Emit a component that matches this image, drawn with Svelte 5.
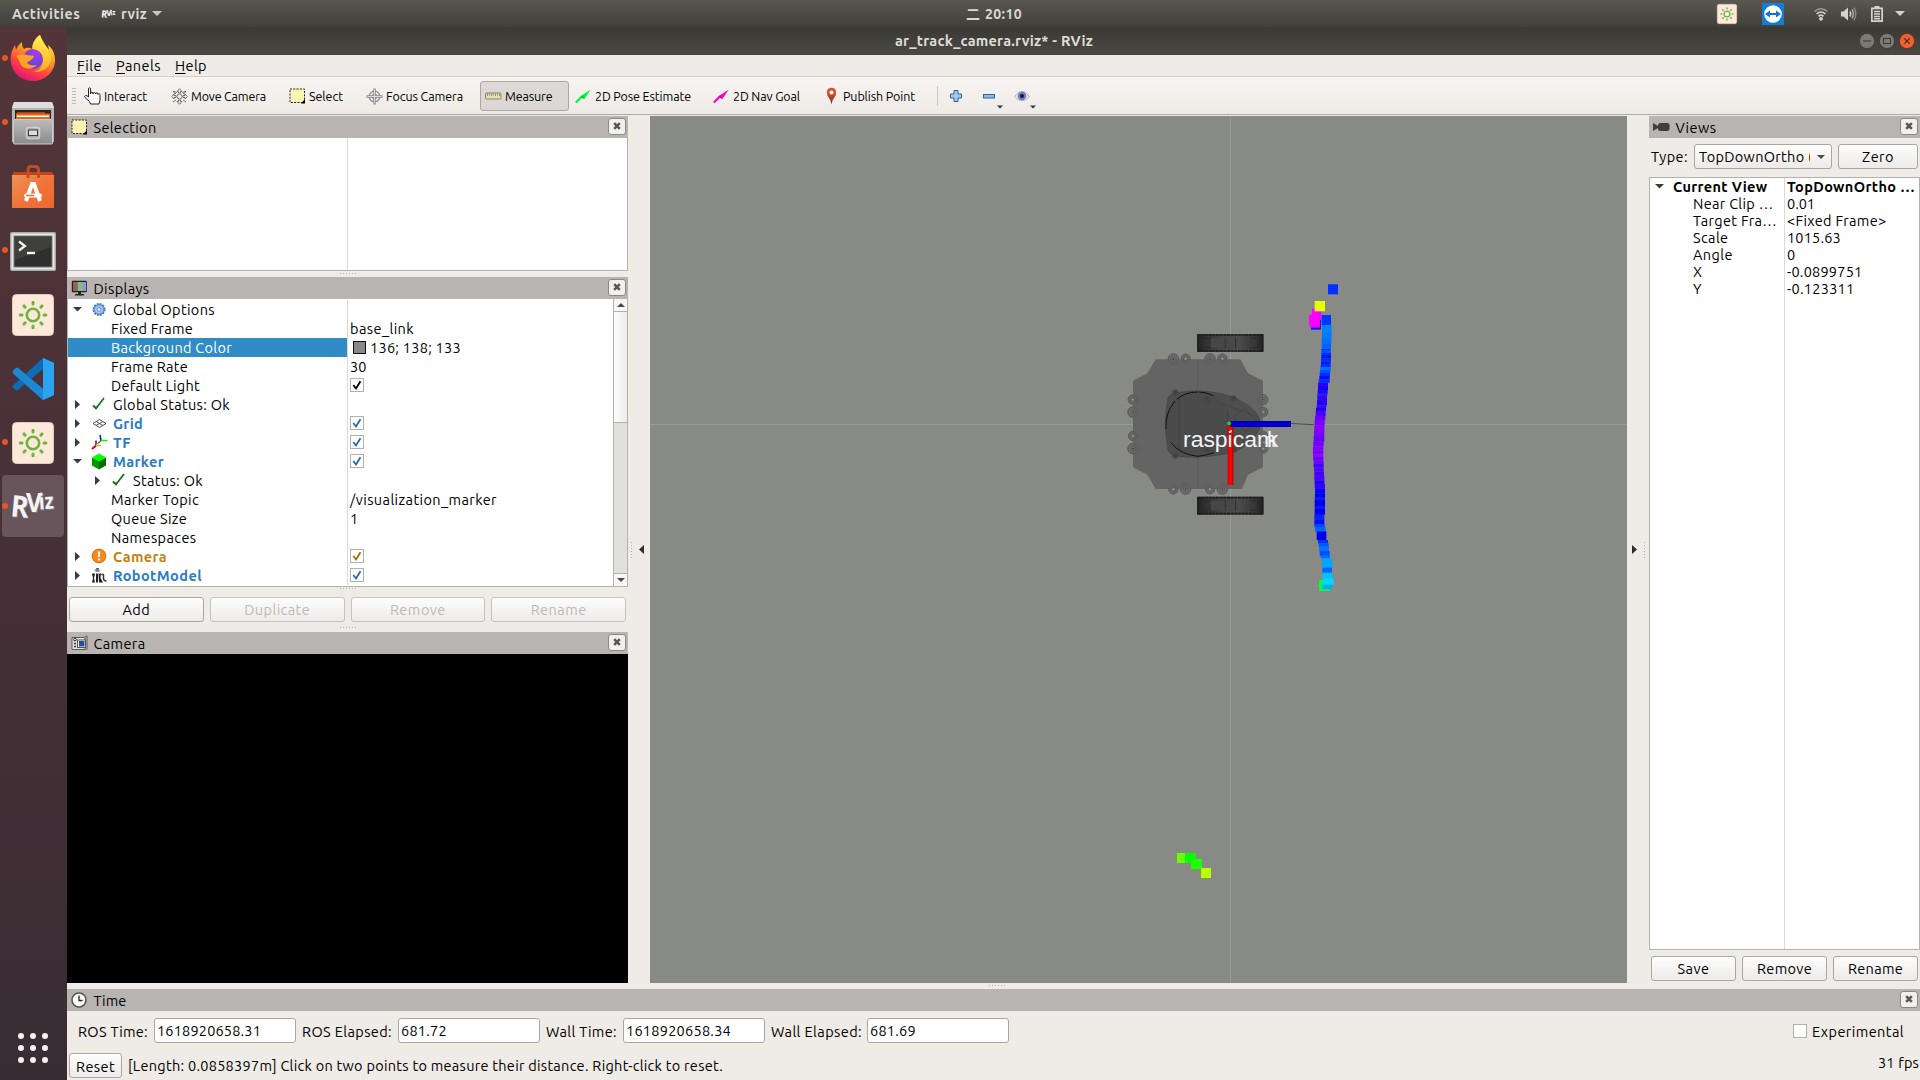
<script>
  // Spreads or tightens the letters so a label takes exactly `width` pixels.
  function fit(node, width) {
    const range = document.createRange();
    range.selectNodeContents(node);
    const natural = range.getBoundingClientRect().width;
    node.style.letterSpacing = (width + 1 - natural) / node.textContent.length + 'px';
  }

  const dock = [
    { icon: 'firefox', run: true }, { icon: 'files', run: true }, { icon: 'store' },
    { icon: 'terminal', run: true }, { icon: 'sun' }, { icon: 'code' },
    { icon: 'sun', run: true }, { icon: 'rviz', run: true, active: true }
  ];

  const tools = [
    { icon: 'hand', text: 'Interact', w: 42, box: 87 },
    { icon: 'move', text: 'Move Camera', w: 74, box: 118 },
    { icon: 'select', text: 'Select', w: 33, box: 77 },
    { icon: 'focus', text: 'Focus Camera', w: 76, box: 114 },
    { icon: 'ruler', text: 'Measure', w: 46.5, box: 89, pressed: true },
    { icon: 'pose', text: '2D Pose Estimate', w: 95, box: 138 },
    { icon: 'goal', text: '2D Nav Goal', w: 66, box: 110 },
    { icon: 'pin', text: 'Publish Point', w: 71, box: 114 }
  ];

  const rows = [
    { arrow: 'down', icon: 'gear', text: 'Global Options', w: 101 },
    { text: 'Fixed Frame', w: 81, value: 'base_link', vw: 63 },
    { text: 'Background Color', w: 120, value: '136; 138; 133', vw: 90, swatch: true, sel: true },
    { text: 'Frame Rate', w: 76, value: '30', vw: 15.5 },
    { text: 'Default Light', w: 88, check: '#000' },
    { arrow: 'right', icon: 'ok', text: 'Global Status: Ok', w: 116 },
    { arrow: 'right', icon: 'grid', text: 'Grid', w: 29, tone: 'blue', check: '#2568b0' },
    { arrow: 'right', icon: 'tf', text: 'TF', w: 17, tone: 'blue', check: '#2568b0' },
    { arrow: 'down', icon: 'cube', text: 'Marker', w: 50, tone: 'blue', check: '#2568b0' },
    { arrow: 'right', icon: 'ok', text: 'Status: Ok', w: 69, deep: true },
    { text: 'Marker Topic', w: 87, value: '/visualization_marker', vw: 146 },
    { text: 'Queue Size', w: 75, value: '1', vw: 7 },
    { text: 'Namespaces', w: 84.5 },
    { arrow: 'right', icon: 'warn', text: 'Camera', w: 53, tone: 'amber', check: '#a86c00' },
    { arrow: 'right', icon: 'robot', text: 'RobotModel', w: 88, tone: 'blue', check: '#2568b0' }
  ];

  const views = [
    ['Near Clip …', 79.5, '0.01', 27], ['Target Fra…', 83, '<Fixed Frame>', 98.5],
    ['Scale', 34.5, '1015.63', 53], ['Angle', 39, '0', 8],
    ['X', 9, '-0.0899751', 74.5], ['Y', 9, '-0.123311', 66.5]
  ];

  const clocks = [
    ['ROS Time:', 69, '1618920658.31', 103, 76], ['ROS Elapsed:', 89, '681.72', 45, 96],
    ['Wall Time:', 70, '1618920658.34', 104, 77], ['Wall Elapsed:', 90, '681.69', 45, 96]
  ];

  // Marker trail slices: top, left, width, colour (each reaches to the next top).
  const trail = [
    [135, 635, 28, '#0036ff'], [165, 636, 29, '#0085ff'], [184, 636, 29, '#007cff'], [205, 635, 29, '#006eff'],
    [222, 635, 28, '#0064ff'], [237, 634, 28, '#0034ff'], [242, 634, 28, '#0058ff'], [248, 634, 29, '#002cff'],
    [254, 634, 29, '#0017ff'], [266, 633, 30, '#0030ff'], [275, 633, 29, '#0018ff'], [284, 632, 30, '#002eff'],
    [291, 631, 32, '#0074ff'], [299, 630, 31, '#0050ff'], [308, 629, 31, '#0030ff'], [318, 628, 31, '#0010ff'],
    [328, 626, 33, '#002cff'], [338, 624, 30, '#2700ff'], [348, 624, 30, '#1200f5'], [360, 623, 30, '#2b00ff'],
    [371, 622, 30, '#0028ff'], [377, 622, 29, '#3600ff'], [390, 621, 30, '#2600ff'], [406, 620, 29, '#4100ff'],
    [414, 618, 30, '#1700ff'], [423, 617, 30, '#4e00ff'], [438, 615, 31, '#6a00ff'], [450, 614, 30, '#7b00ff'],
    [466, 613, 30, '#8700ff'], [483, 612, 31, '#7900ff'], [498, 611, 32, '#6900ff'], [515, 610, 31, '#7400ff'],
    [529, 609, 31, '#8500ff'], [542, 609, 31, '#7400ff'], [553, 609, 31, '#9500ff'], [561, 610, 30, '#6600ff'],
    [572, 611, 30, '#7600ff'], [580, 611, 30, '#3f00ff'], [592, 612, 29, '#5700ff'], [604, 613, 29, '#3700ff'],
    [617, 613, 30, '#4b00ff'], [632, 614, 29, '#1800ff'], [642, 614, 31, '#3500ff'], [655, 615, 30, '#0a00ff'],
    [671, 615, 30, '#0000e8'], [681, 614, 31, '#0018ff'], [689, 614, 31, '#0000f0'], [708, 614, 31, '#001aff'],
    [717, 614, 31, '#0000f0'], [734, 613, 30, '#0022ff'], [748, 613, 30, '#0010ff'], [762, 613, 31, '#0045ff'],
    [771, 615, 32, '#0064ff'], [784, 620, 29, '#0000ed'], [810, 624, 30, '#0030ff'], [820, 626, 30, '#0057ff'],
    [830, 627, 30, '#0076ff'], [843, 629, 30, '#0050ff'], [857, 632, 28, '#0073ff'], [865, 636, 31, '#00a6ff'],
    [893, 637, 29, '#0065ff'], [908, 638, 30, '#00bfff'], [925, 639, 32, '#00d8ff'], [944, 637, 29, '#00aaff'], [957, 0, 0, '#000']
  ];
  const bolts = [
    [190, 267, 1], [227, 266, 0], [300, 267, 1], [337, 266, 0], [190, 658, 0], [227, 657, 1], [300, 658, 0], [337, 657, 1],
    [68, 389, 0], [69, 426, 1], [69, 498, 0], [69, 536, 1], [458, 389, 1], [460, 426, 0], [460, 498, 0], [460, 536, 0]
  ];
  const rays = [0, 45, 90, 135, 180, 225, 270, 315];
</script>

{#snippet close()}
  <span class="close"><svg width="8" height="8" viewBox="0 0 8 8"><path d="M1.2 1.2L6.8 6.8M6.8 1.2L1.2 6.8" stroke="#5a5856" stroke-width="2.6" /></svg></span>
{/snippet}

{#snippet sun(size, h)}
  <svg width={size} height={h} viewBox="0 0 42 42" preserveAspectRatio="none">
    <rect x=".5" y=".5" width="41" height="41" rx="4" fill="#fde8d9" stroke="#e3cbbb" />
    <g fill="none" stroke="#6db33f" stroke-width="2.6" stroke-linecap="round">
      <circle cx="21" cy="21" r="6.2" />
      {#each rays as a}<path d="M21 10V8.200" stroke-width="3" transform="rotate({a} 21 21)" />{/each}
    </g>
  </svg>
{/snippet}

{#snippet rvizLogo(w, h)}
  <svg width={w} height={h} viewBox="0 0 46 28">
    <g class="rviz-shadow"><text x="2" y="26" font-size="30" textLength="18" lengthAdjust="spacingAndGlyphs" transform="rotate(5 10 14)">R</text><text x="17" y="21" font-size="26" textLength="16" lengthAdjust="spacingAndGlyphs">V</text><text x="30" y="18" font-size="22" textLength="15" lengthAdjust="spacingAndGlyphs" transform="rotate(-4 36 14)">iz</text></g>
    <g class="rviz-face"><text x="1" y="25" font-size="30" textLength="18" lengthAdjust="spacingAndGlyphs" transform="rotate(5 10 14)">R</text><text x="16" y="20" font-size="26" textLength="16" lengthAdjust="spacingAndGlyphs">V</text><text x="29" y="17" font-size="22" textLength="15" lengthAdjust="spacingAndGlyphs" transform="rotate(-4 36 14)">iz</text></g>
  </svg>
{/snippet}

{#snippet dockIcon(name)}
  {#if name === 'firefox'}
    <svg width="46" height="48" viewBox="0 0 46 48">
      <defs>
        <linearGradient id="ff" x1=".8" y1="0" x2=".3" y2="1"><stop offset=".1" stop-color="#ffe83f" /><stop offset=".42" stop-color="#ff9a22" /><stop offset=".72" stop-color="#ff4040" /><stop offset="1" stop-color="#e3117b" /></linearGradient>
        <radialGradient id="fg" cx=".65" cy=".2" r=".9"><stop offset="0" stop-color="#a83af0" /><stop offset="1" stop-color="#4a4bd0" /></radialGradient>
        <linearGradient id="fy" x1="0" y1="0" x2="0" y2="1"><stop offset="0" stop-color="#fff44f" /><stop offset="1" stop-color="#ffb42a" /></linearGradient>
      </defs>
      <path d="M30 1C24 5 22 11 22 15C19 13 16 14 14 15C12 13 12 10 12 8C9 10 7 13 6 16L5 11C1 17 0 24 1 29C3 40 12 47 23 47C36 47 45 37 45 26C45 19 42 14 38 11L39 16C35 11 32 8 30 1Z" fill="url(#ff)" />
      <circle cx="23" cy="25" r="10" fill="url(#fg)" />
      <path d="M30 1C24 5 22 11 23 15C30 16 34 21 33 28C32 34 28 37 23 38C35 39 42 31 41 23C41 17 34 11 30 1Z" fill="url(#fy)" opacity=".85" />
      <path d="M6 22C10 20 14 20 17 21C20 22 22 21 24 22C23 26 18 27 17 29C19 31 23 32 27 31C21 37 12 35 10 29C9 26 8 24 6 22Z" fill="#ffa228" />
    </svg>
  {:else if name === 'files'}
    <svg width="44" height="44" viewBox="0 0 44 44">
      <defs><linearGradient id="cab" x1="0" y1="0" x2="0" y2="1"><stop offset="0" stop-color="#bcbcbc" /><stop offset="1" stop-color="#8a8a8a" /></linearGradient></defs>
      <path d="M3 1H41L43 6V41H1V6Z" fill="#b4b4b4" /><path d="M3 1H41L43 7H1Z" fill="#dedede" />
      <path d="M4 9H40V19H4Z" fill="#2a2522" /><path d="M6 11H34V18H6Z" fill="#b3410e" /><path d="M5 12.500H39V19H5Z" fill="#e9671c" /><path d="M6 14.500H38V16H6Z" fill="#fff" />
      <rect x="2.500" y="18.500" width="39" height="24.500" rx="1" fill="url(#cab)" stroke="#cacaca" />
      <rect x="15.500" y="26.500" width="13" height="11" rx="2" fill="#aaa" stroke="#d0d0d0" stroke-width="1.500" /><rect x="17.500" y="29" width="9" height="5.500" fill="#ddd" stroke="#3d3d3d" />
    </svg>
  {:else if name === 'store'}
    <svg width="42" height="44" viewBox="0 0 42 44">
      <defs><linearGradient id="bag" x1="0" y1="0" x2="1" y2="1"><stop offset="0" stop-color="#e8955a" /><stop offset=".5" stop-color="#f07439" /><stop offset="1" stop-color="#ee672c" /></linearGradient></defs>
      <path d="M2 7H40L42 10V43H0V10Z" fill="#bf4518" /><path d="M0 10H42V43H0Z" fill="url(#bag)" />
      <path d="M16 13V5Q16 1.500 19 1.500H23Q26.500 1.500 26.500 5V13" fill="none" stroke="#c34b1f" stroke-width="3" />
      <path d="M14 36L20 19H22L28 36" fill="none" stroke="#fff" stroke-width="4" /><rect x="12" y="28.500" width="18" height="4" rx="2" fill="#fff" /><path d="M14 30.500H22" stroke="#f07439" stroke-width="1.500" />
    </svg>
  {:else if name === 'terminal'}
    <svg width="46" height="40" viewBox="0 0 46 40">
      <rect x=".75" y=".75" width="44.500" height="37.500" rx="1" fill="#e8e8e8" stroke="#aaa" stroke-width="1.500" /><rect x="4" y="4" width="38" height="31" fill="#2f302e" stroke="#777" /><path d="M5 5H41V15L5 28Z" fill="#3f403e" />
      <path d="M9 9.500L15 14L9 18.500" fill="none" stroke="#f5f5f5" stroke-width="2.200" /><path d="M17 21H25" stroke="#f5f5f5" stroke-width="2.400" />
    </svg>
  {:else if name === 'sun'}
    {@render sun(42, 42)}
  {:else if name === 'code'}
    <svg width="42" height="42" viewBox="0 0 42 42">
      <path d="M31 0L42 5V37L31 42L1 15.500Q0 14 1 13L4 10Q5 9.500 6 10L31 31Z" fill="#1687cf" />
      <path d="M31 0L1 27.500Q0 29 1 30L4 32Q5 32.500 6 32L31 11Z" fill="#0d6cb4" /><path d="M1 13L4 10Q5 9.500 6 10L31 31V42L1 15Z" fill="#1a8ad6" /><path d="M31 0L42 5V37L31 42Z" fill="#2aa3f0" />
    </svg>
  {:else}
    {@render rvizLogo(46, 28)}
  {/if}
{/snippet}

{#snippet selectIcon()}
  <svg width="17" height="16" viewBox="0 0 17 16"><rect x="1" y="1" width="14.500" height="13.500" fill="#fbf3b4" stroke="#222" stroke-width="1" stroke-dasharray="2 1.300" /><path d="M16 11L12 15.500H16Z" fill="#000" /></svg>
{/snippet}

{#snippet toolIcon(name)}
  {#if name === 'hand'}
    <svg width="17" height="18" viewBox="0 0 17 18"><path d="M4.500 10V1.800Q4.500 .8 5.500 .8T6.600 1.800V7Q6.600 5 7.900 5.200T9.200 7Q9.200 5.300 10.500 5.500T11.700 7Q11.700 5.800 13 5.900T14 7.500Q14.500 6.500 15.400 6.800T16 8.500V13L15 17H6.500L5.500 14.500L1 10.500Q0 9 1.500 8.600T4.500 10Z" fill="#fff" stroke="#222" /></svg>
  {:else if name === 'move'}
    <svg width="17" height="17" viewBox="0 0 17 17"><g fill="#eee" stroke="#666" stroke-width=".9"><path d="M8.500 .7L11 3.500H9.500V5H7.500V3.500H6ZM8.500 16.300L11 13.500H9.500V12H7.500V13.500H6ZM.7 8.500L3 6V7.500H5V9.500H3V11ZM16.300 8.500L14 6V7.500H12V9.500H14V11Z" /><circle cx="8.500" cy="8.500" r="2.500" /><path d="M2 3L5.500 4.500L4 6ZM15 3L11.500 4.500L13 6ZM2 14L5 12M15 14L12 12" /></g></svg>
  {:else if name === 'select'}
    {@render selectIcon()}
  {:else if name === 'focus'}
    <svg width="17" height="17" viewBox="0 0 17 17"><g fill="none" stroke="#8b8b8b"><circle cx="8.500" cy="8.500" r="5.300" stroke-width="1.200" /><circle cx="8.500" cy="8.500" r="2.500" /><path d="M8.500 .5V16.500M.5 8.500H16.500" stroke-width="2.400" /></g><path d="M8.500 1.500V15.500M1.500 8.500H15.500" stroke="#eee" stroke-width=".8" /></svg>
  {:else if name === 'ruler'}
    <svg width="17" height="8" viewBox="0 0 17 8"><rect x=".5" y="1" width="15.500" height="6" rx=".6" fill="#e8dfae" stroke="#8a856a" /><path d="M2.500 1.500V4M4.500 1.500V3.500M6.500 1.500V4M8.500 1.500V3.500M10.500 1.500V4M12.500 1.500V3.500M14.500 1.500V4" stroke="#777" stroke-width=".8" /></svg>
  {:else if name === 'pose' || name === 'goal'}
    <svg class={name} width="17" height="15" viewBox="0 0 17 15"><path d="M.8 13.500L7 7.500" stroke="currentColor" stroke-width="2.200" /><path d="M5 7.500L15.500 .8L9.500 10Z" fill="currentColor" /><path d="M6.500 6.500L9.500 10L7 8.500Z" fill="#222" opacity=".7" /></svg>
  {:else}
    <svg width="17" height="18" viewBox="0 0 17 18"><defs><linearGradient id="pn" x1="0" y1="0" x2="0" y2="1"><stop offset=".3" stop-color="#e0522f" /><stop offset=".8" stop-color="#7a3b22" /></linearGradient></defs><path d="M8.500 17.500Q7.500 12 4.300 8.500Q2.300 1 8.500 .8Q14.700 1 12.700 8.500Q9.500 12 8.500 17.500Z" fill="url(#pn)" /><circle cx="8.500" cy="5.500" r="1.900" fill="#fff" /></svg>
  {/if}
{/snippet}

{#snippet rowIcon(name)}
  {#if name === 'gear'}
    <svg width="15" height="14" viewBox="0 0 15 14"><circle cx="7" cy="6.500" r="5.500" fill="#8fb3e2" stroke="#3f74bd" stroke-width="2" stroke-dasharray="1.800 1.080" /><circle cx="7" cy="6.500" r="4.600" fill="#a8c6ec" stroke="#5a8bce" /><circle cx="7" cy="6.500" r="1.800" fill="#fff" stroke="#3f74bd" stroke-width=".8" /></svg>
  {:else if name === 'ok'}
    <svg width="15" height="14" viewBox="0 0 15 14"><path d="M1 7.500L4 10.500L12 0" fill="none" stroke="#1c7420" stroke-width="1.800" /><path d="M.5 7L4 11.500L6 8.500L3.500 8.500Z" fill="#1c7420" /></svg>
  {:else if name === 'grid'}
    <svg width="15" height="12" viewBox="0 0 15 12"><path d="M1 5.500L7.500 1.500L14 5.500L7.500 9.500ZM4.200 3.500L10.700 7.500M10.700 3.500L4.200 7.500" fill="none" stroke="#444" stroke-width="1" /></svg>
  {:else if name === 'tf'}
    <svg width="17" height="15" viewBox="0 0 17 15"><g fill="none" stroke-width="1.500" transform="translate(-1 -.5)"><path d="M10 6L9 .5M5 11V6" stroke="#0018f0" /><path d="M10 6H16.500" stroke="#0f0" /><path d="M10 6L6 10" stroke="#c30" /><path d="M5 11H10" stroke="#8c4" /><path d="M5 11L1 14.500" stroke="#f00000" stroke-width="2" /><path d="M8 9L5 11" stroke="#fc5" /></g></svg>
  {:else if name === 'cube'}
    <svg width="15" height="16" viewBox="0 0 15 16"><g transform="translate(-.5 -.5)"><path d="M.5 4L7.500 7.500V16L.5 12Z" fill="#009800" /><path d="M14.500 4L7.500 7.500V16L14.500 12Z" fill="#007000" /><path d="M.5 4L7.500 0L14.500 4L7.500 8Z" fill="#00ff00" /></g></svg>
  {:else if name === 'warn'}
    <svg width="15" height="15" viewBox="0 0 15 15"><g transform="translate(-.5 -.5)"><circle cx="7.500" cy="7.500" r="6.900" fill="#f58a1c" stroke="#d76c06" /><path d="M7.500 3V8.500M7.500 10V12" stroke="#fff" stroke-width="2" /></g></svg>
  {:else}
    <svg width="17" height="16" viewBox="0 0 17 16"><g transform="translate(-1 0)"><path d="M5 .8H8M4.500 3H8.500" stroke="#234" stroke-width="1.200" /><path d="M3.500 2H8.500" stroke="#4a6fb5" /><path d="M1 6Q3 4.500 4 6L3 10L4 14.500H1L2 10ZM5 5.500H7.500L7 14.500H5ZM8 6L10 5L9.500 10L12 14.500H8Z" fill="#222" /><path d="M10.500 7Q13 5 12.500 9T15.500 13" fill="none" stroke="#333" stroke-width="1.500" /></g></svg>
  {/if}
{/snippet}

{#snippet arrow(dir)}
  <svg width="9" height="9" viewBox="0 0 9 9"><path d={dir === 'down' ? 'M0 2H9L4.500 6.500Z' : 'M2 0V9L7 4.500Z'} fill="#3d3c3a" /></svg>
{/snippet}

<div class="screen">
  <header class="top">
    <span class="activities" use:fit={67.5}>Activities</span>
    <span class="mini">{@render rvizLogo(15, 10)}</span>
    <span class="app" use:fit={25}>rviz</span>
    <svg class="caret" width="10" height="5"><path d="M0 0H10L5 5Z" fill="#c9c7c2" /></svg>
    <span class="clock"><span class="han">二</span><span use:fit={36}>20:10</span></span>
    <span class="tray">
      <span class="t-sun">{@render sun(20, 20)}</span>
      <svg class="t-tv" width="22" height="22" viewBox="0 0 22 22"><rect width="22" height="22" fill="#0f7ce0" /><circle cx="11" cy="11" r="8.800" fill="#fff" /><path d="M3 11L8 7.500V10H14V7.500L19 11L14 14.500V12H8V14.500Z" fill="#1172d4" /></svg>
      <svg class="t-wifi" width="14" height="14" viewBox="0 0 14 14"><g fill="none" stroke="#d5d3cf" stroke-width="1.600"><path d="M.5 4.500Q7-1 13.500 4.500" opacity=".55" /><path d="M2.500 7Q7 3 11.500 7M4.500 9.300Q7 7 9.500 9.300" /></g><circle cx="7" cy="11.800" r="1.900" fill="#d5d3cf" /></svg>
      <svg class="t-vol" width="16" height="14" viewBox="0 0 16 14"><path d="M0 4.500H2.500L7 .5V13.500L2.500 9.500H0Z" fill="#d5d3cf" /><g fill="none" stroke="#d5d3cf" stroke-width="1.500"><path d="M9 4.500Q10.500 7 9 9.500" /><path d="M11 2.500Q13.500 7 11 11.500" opacity=".7" /><path d="M13 .7Q16.500 7 13 13.300" opacity=".45" /></g></svg>
      <svg class="t-bat" width="12" height="16" viewBox="0 0 12 16"><path d="M3.500 0H8.500V1.500H12V16H0V1.500H3.500ZM1.700 3.200V14.300H10.300V3.200Z" fill="#d5d3cf" fill-rule="evenodd" /><path d="M3 5.500H9M3 8H9M3 10.400H9M3 12.700H9" stroke="#d5d3cf" stroke-width="1.500" /></svg>
      <svg width="10" height="5"><path d="M0 0H10L5 5Z" fill="#d5d3cf" /></svg>
    </span>
  </header>

  <div class="desk">
    <nav class="dock">
      {#each dock as d}
        <div class="slot" class:active={d.active}>
          <i class="pip" class:on={d.run}></i>
          <span class="tile {d.icon}">{@render dockIcon(d.icon)}</span>
        </div>
      {/each}
      <div class="apps">{#each Array(9) as _}<i></i>{/each}</div>
    </nav>

    <main>
      <div class="titlebar">
        <span use:fit={197}>ar_track_camera.rviz* - RViz</span>
        <div class="wm">
          <svg width="16" height="16"><circle cx="8" cy="8" r="7.600" fill="#7b7973" stroke="#33322e" stroke-width=".7" /><path d="M4 8H12" stroke="#383732" /></svg>
          <svg width="16" height="16"><circle cx="8" cy="8" r="7.600" fill="#7b7973" stroke="#33322e" stroke-width=".7" /><rect x="4.500" y="5.500" width="7" height="5" fill="none" stroke="#383732" /></svg>
          <svg width="16" height="16"><circle cx="8" cy="8" r="7.600" fill="#ee6032" stroke="#5a2a18" stroke-width=".7" /><path d="M5.300 5.300L10.700 10.700M10.700 5.300L5.300 10.700" stroke="#41281e" stroke-width="1.100" /></svg>
        </div>
      </div>
      <div class="menu">
        <span class="m1" use:fit={24}><u>F</u>ile</span><span class="m2" use:fit={44}><u>P</u>anels</span><span use:fit={31}><u>H</u>elp</span>
      </div>
      <div class="toolbar">
        <i class="grip"></i>
        {#each tools as t}
          <div class="tool" class:pressed={t.pressed} style="width:{t.box}px"><span class="ic">{@render toolIcon(t.icon)}</span><span use:fit={t.w}>{t.text}</span></div>
        {/each}
        <i class="sep"></i>
        <svg class="plus" width="12" height="12" viewBox="0 0 12 12"><path d="M4 .5H8V4H11.500V8H8V11.500H4V8H.5V4H4Z" fill="#a4c8ea" stroke="#2f6296" /></svg>
        <svg class="minus" width="18" height="25" viewBox="0 0 18 25"><rect x=".5" y="10.500" width="11" height="3.500" fill="#8fbbe4" stroke="#2f6296" /><path d="M14 21.500H20L17 24.500Z" fill="#333" /></svg>
        <svg width="23" height="25" viewBox="0 0 23 25"><path d="M.5 12.500Q8 2 15.500 12.500Q8 21 .5 12.500Z" fill="#ececea" stroke="#b5b3ae" /><circle cx="8" cy="12" r="4.300" fill="#6c7dbd" /><circle cx="8" cy="12" r="2" fill="#151a33" /><path d="M16 21.500H22L19 24.500Z" fill="#333" /></svg>
      </div>

      <div class="mid">
        <section class="left">
          <div class="bar">{@render selectIcon()}<span use:fit={62}>Selection</span>{@render close()}</div>
          <div class="selbody"></div>
          <div class="split s7"><i></i></div>
          <div class="bar">
            <svg width="17" height="16" viewBox="0 0 17 16"><rect x=".8" y=".8" width="15" height="11.400" rx="1" fill="#222" /><rect x="2" y="2" width="4.500" height="9" fill="#a05c5c" /><rect x="6.500" y="2" width="4.500" height="9" fill="#80c080" /><rect x="11" y="2" width="4" height="9" fill="#9898d0" /><path d="M7 12H10V14H13V15.500H4V14H7Z" fill="#222" /></svg>
            <span use:fit={55}>Displays</span>{@render close()}
          </div>
          <div class="tree">
            <div class="rows">
              {#each rows as r}
                <div class="row">
                  <div class="name" class:sel={r.sel} class:deep={r.deep} class:leaf={!r.icon}>
                    {#if r.icon}<span class="arr">{@render arrow(r.arrow)}</span><span class="ric">{@render rowIcon(r.icon)}</span>{/if}
                    <span class="txt {r.tone ?? ''}" use:fit={r.w}>{r.text}</span>
                  </div>
                  <div class="val">
                    {#if r.check}<svg class="cb" width="14" height="14" viewBox="0 0 14 14"><rect x=".5" y=".5" width="13" height="13" fill="#fff" stroke="#b4b0ac" /><path d="M3.300 7L6 10.500L10.500 3.200" fill="none" stroke={r.check} stroke-width="1.800" /></svg>{/if}
                    {#if r.swatch}<i class="swatch"></i>{/if}
                    {#if r.value}<span use:fit={r.vw}>{r.value}</span>{/if}
                  </div>
                </div>
              {/each}
            </div>
            <div class="scroll">
              <span class="sb"><svg width="8" height="4"><path d="M0 4H8L4 0Z" fill="#4a4947" /></svg></span>
              <span class="thumb"></span><span class="trough"></span>
              <span class="sb end"><svg width="8" height="4"><path d="M0 0H8L4 4Z" fill="#4a4947" /></svg></span>
            </div>
          </div>
          <div class="split s11"><i></i></div>
          <div class="btns">
            <button><span use:fit={27}>Add</span></button><button disabled><span use:fit={65}>Duplicate</span></button><button disabled><span use:fit={55}>Remove</span></button><button disabled><span use:fit={55}>Rename</span></button>
          </div>
          <div class="split s10"><i></i></div>
          <div class="bar">
            <svg width="17" height="16" viewBox="0 0 17 16"><path d="M1 2.500H13L16 .8V14.500H1Z" fill="#e4e3e0" stroke="#5c5b59" /><path d="M13 3L16 1V15L13 14Z" fill="#8d8c8a" /><rect x="6.500" y="5" width="8" height="7.500" fill="#fff" stroke="#555" /><rect x="8" y="6" width="5.500" height="5.500" fill="#214f9c" /><circle cx="4" cy="4.500" r="1.300" fill="#fff" stroke="#222" /><path d="M3 8.500H5M3 11.500H5" stroke="#333" stroke-width="1.300" /></svg>
            <span use:fit={51}>Camera</span>{@render close()}
          </div>
          <div class="feed"></div>
        </section>

        <div class="gutter gl"><i></i><svg width="5" height="9"><path d="M5 0V9L0 4.500Z" fill="#2d2c2b" /></svg></div>

        <svg class="scene" width="977" height="867" viewBox="650 116 977 867">
          <defs><linearGradient id="wheel" x1="0" y1="0" x2="1" y2="0"><stop offset="0" stop-color="#202020" /><stop offset=".12" stop-color="#303030" /><stop offset=".35" stop-color="#444" /><stop offset=".62" stop-color="#4b4b4b" /><stop offset=".88" stop-color="#363636" /><stop offset="1" stop-color="#1e1e1e" /></linearGradient></defs>
          <rect x="650" y="116" width="977" height="867" fill="#888a85" />
          <path d="M1230.500 116V983M650 424.500H1627" stroke="#979994" />
          <g transform="translate(1110 270) scale(.33333)">
            {#each bolts as b}
              <ellipse cx={b[0]} cy={b[1]} rx={b[2] ? 16 : 14} ry={b[2] ? 16 : 14} fill="#6d6d6b" stroke="#4c4c4c" stroke-width="1.500" />
            {/each}
            <path d="M137 268H391L414 310L459 332V592L414 614L396 657H137L112 614L69 592V332L112 310Z" fill="#646464" />
            <path d="M263 268V370M263 560V657" stroke="#575757" stroke-width="2" />
            {#each bolts as b}<circle cx={b[0]} cy={b[1]} r={b[2] ? 15 : 13} fill="none" stroke="#505050" stroke-width="1.500" /><circle cx={b[0]} cy={b[1]} r="7" fill="#747474" stroke="#454545" stroke-width="1.500" /><circle cx={b[0]} cy={b[1]} r="2.500" fill={b[2] ? '#333' : '#999'} />{/each}
            <path d="M190 372Q172 375 173 391Q160 460 173 530Q172 550 190 555Q225 566 290 560Q340 553 370 548Q430 520 447 480Q460 440 420 410L378 384Q320 365 275 363Q220 361 190 372Z" fill="#4e4e4e" stroke="#414141" stroke-width="2" />
            <circle cx="264" cy="461" r="97" fill="#4b4b4b" />
            <path d="M208 383V540M353 420V500M335 400Q400 425 445 440M370 440L405 415L440 455L405 485Z" fill="none" stroke="#3b3b3b" stroke-width="1.500" />
            <path d="M267 366Q290 367 311 377M200 388Q225 366 263 366M195 393Q164 430 168 477M182 517Q210 554 264 559Q290 556 312 548" fill="none" stroke="#050505" stroke-width="2.500" />
            {#each [[196, 367], [291, 388], [370, 385], [196, 557], [291, 538], [370, 538]] as c}<circle cx={c[0]} cy={c[1]} r="8" fill="#4a4a4a" stroke="#393939" stroke-width="1.500" /><circle cx={c[0]} cy={c[1]} r="3" fill="#3c3c3c" />{/each}
            {#each [192, 680] as y}
              <rect x="261" y={y} width="200" height="54" rx="3" fill="url(#wheel)" />
              <path d="M263 {y + 3}H459M263 {y + 51}H459" stroke="#1d1d1d" stroke-width="5" stroke-dasharray="9 2" />
              <path d="M276 {y + 13}H302V{y + 41}H276M420 {y + 13}H443V{y + 41}H420M345 {y + 12}V{y + 42}M377 {y + 12}V{y + 42}" fill="none" stroke="#2b2b2b" stroke-width="3" />
              <rect x="302" y={y + 13} width="42" height="28" fill="#474747" />
            {/each}
            <path d="M543 461L612 464" stroke="#222" stroke-width="2" />
            <rect x="353" y="462" width="17" height="183" fill="#c80000" /><path d="M361 462V645" stroke="#f00" stroke-width="11" />
            <rect x="361" y="453" width="182" height="18" fill="#0000a6" /><path d="M362 463H543" stroke="#0000e0" stroke-width="9" />
            <path d="M351 458L358 453L364 459L361 465H353Z" fill="#00e800" />
            <path d="M603 179H633V148H603Z" fill="#0020e8" /><path d="M606 116H634V150H606Z" fill="#ff00ff" /><path d="M600 134H630V173H600Z" fill="#f400ff" /><path d="M597 134H625V166H597Z" fill="#ff00ff" />
            <rect x="614" y="93" width="31" height="31" fill="#e8ff00" /><rect x="654" y="43" width="30" height="30" fill="#0030ff" />
            <rect x="627" y="930" width="32" height="33" fill="#00ff40" />
            {#each trail.slice(0, -1) as s, i}<rect x={s[1]} y={s[0]} width={s[2]} height={trail[i + 1][0] - s[0] + .5} fill={s[3]} />{/each}
          </g>
          <g class="label"><text x="1183" y="446.500" textLength="93" lengthAdjust="spacingAndGlyphs">raspicam</text><text x="1267" y="446.500">k</text></g>
          <circle cx="1231" cy="431" r="1" fill="#fcc" />
          <g fill="#65ff00"><rect x="1177" y="853" width="9" height="10" /><rect x="1185" y="853" width="11" height="10" fill="#0f0" /><rect x="1191" y="859" width="11" height="10" fill="#1eff00" /><rect x="1201" y="868" width="10" height="10" fill="#b8ff00" /></g>
        </svg>

        <div class="gutter gr"><svg width="5" height="9"><path d="M0 0V9L5 4.500Z" fill="#2d2c2b" /></svg><i></i></div>

        <section class="right">
          <div class="bar">
            <svg width="17" height="10" viewBox="0 0 17 10"><path d="M0 1L5 4V6L0 9Z" fill="#3f3e3c" /><rect x="5" y="1" width="11.500" height="8" rx="2.500" fill="#3f3e3c" /></svg>
            <span use:fit={40}>Views</span>{@render close()}
          </div>
          <div class="type">
            <span use:fit={36}>Type:</span>
            <div class="combo"><span class="clip"><span use:fit={113}>TopDownOrtho (</span></span><svg width="8" height="4"><path d="M0 0H8L4 4Z" fill="#4a4947" /></svg></div>
            <button class="zero"><span use:fit={31}>Zero</span></button>
          </div>
          <div class="vtree">
            <div class="vrow head"><span class="vn">{@render arrow('down')}<b use:fit={93.5}>Current View</b></span><b use:fit={127}>TopDownOrtho …</b></div>
            {#each views as v}
              <div class="vrow"><span class="vn sub"><span use:fit={v[1]}>{v[0]}</span></span><span use:fit={v[3]}>{v[2]}</span></div>
            {/each}
          </div>
          <div class="btns vb"><button><span use:fit={31}>Save</span></button><button><span use:fit={54}>Remove</span></button><button><span use:fit={54}>Rename</span></button></div>
        </section>
      </div>

      <div class="split s6"><i></i></div>
      <div class="bar time">
        <svg width="17" height="16" viewBox="0 0 17 16"><circle cx="8" cy="8" r="7" fill="#fff" stroke="#555452" stroke-width="1.600" /><path d="M8 3.500V8.500H11.500" fill="none" stroke="#222" stroke-width="1.300" /></svg>
        <span use:fit={32}>Time</span>{@render close()}
      </div>
      <div class="times">
        {#each clocks as c}
          <span class="lab" style="width:{c[4]}px"><span use:fit={c[1]}>{c[0]}</span></span><span class="field"><span use:fit={c[3]}>{c[2]}</span></span>
        {/each}
        <span class="exp"><i></i><span use:fit={91}>Experimental</span></span>
      </div>
      <div class="status">
        <button class="reset"><span use:fit={38}>Reset</span></button>
        <span use:fit={594}>[Length: 0.0858397m] Click on two points to measure their distance. Right-click to reset.</span>
        <span class="fps" use:fit={40}>31 fps</span>
      </div>
    </main>
  </div>
</div>

<style>
  :global(body) { overflow: hidden; }
  .screen { width: 1920px; height: 1080px; display: flex; flex-direction: column; overflow: hidden; font: 14.500px/19px Ubuntu, 'Noto Sans', 'Noto Sans CJK SC', sans-serif; color: #000; background: #efebe7; }
  .screen * { box-sizing: border-box; }
  .screen span, .screen b { white-space: nowrap; }
  svg { display: block; flex: none; overflow: visible; }
  button { font: inherit; color: inherit; padding: 0; height: 25px; border: 1px solid #aaa6a2; border-radius: 3px; background: linear-gradient(#fdfdfc, #edebe9); }
  button:disabled { color: #bdbab7; border-color: #c6c2be; }

  .top { height: 27px; flex: none; display: flex; align-items: center; padding-left: 12px; background: linear-gradient(#59574f, #403f3a); color: #dad8d3; font-weight: 600; font-size: 14px; }
  .activities { width: 89px; padding-top: 1px; }
  .mini { width: 20px; }
  .app { width: 31px; padding-top: 1px; }
  .clock { margin-left: 804px; display: flex; width: 60px; gap: 4px; padding-top: 2px; }
  .han { width: 15px; }
  .tray { margin-left: auto; display: flex; align-items: center; padding-right: 15px; }
  .t-sun { margin-right: 25px; }
  .t-tv { margin-right: 30px; }
  .t-wifi { margin-right: 13px; }
  .t-vol { margin-right: 14px; }
  .t-bat { margin-right: 12px; }
  .rviz-face text, .rviz-shadow text { font-family: 'Open Sans', sans-serif; font-weight: 700; fill: #f3f3f3; }
  .rviz-shadow text { fill: #78757a; }

  .desk { flex: 1; display: flex; min-height: 0; }
  .dock { width: 67px; background: linear-gradient(#533539, #432f36 60%, #392d33); display: flex; flex-direction: column; gap: 2px; }
  .slot { height: 62px; margin: 0 3px 0 2px; display: flex; align-items: center; position: relative; border-radius: 4px; }
  .slot.active { background: #68545b; }
  .pip { width: 6px; height: 6px; border-radius: 50%; margin-right: 2px; }
  .pip.on { background: #e9541f; }
  .tile { width: 46px; display: flex; justify-content: center; }
  .files { padding-top: 1px; }
  .sun, .code { padding-top: 2px; }
  .store { padding-top: 1px; }
  .terminal { padding-top: 4px; }
  .apps { margin: auto 0 17px 18px; width: 33px; display: grid; grid-template-columns: repeat(3, 6px); gap: 6px; }
  .apps i { width: 6px; height: 6px; border-radius: 50%; background: #f4f2f1; }

  main { flex: 1; display: flex; flex-direction: column; min-width: 0; }
  .titlebar { height: 28px; flex: none; display: flex; align-items: center; padding: 0 0 2px 828px; background: linear-gradient(#3a3934, #4a4842); color: #dfdcd6; font-weight: 600; }
  .wm { margin-left: auto; padding: 1px 5px 0 0; display: flex; gap: 4px; }
  .menu { height: 22px; flex: none; display: flex; align-items: center; padding-left: 10px; border-bottom: 1px solid #d3d0cb; }
  .m1 { width: 39px; }
  .m2 { width: 59px; }
  u { text-underline-offset: 2px; }
  .toolbar { height: 38px; flex: none; display: flex; align-items: center; background: linear-gradient(#f7f4f1, #eeebe7); border-bottom: 1px solid #aeaaa6; font-size: 12.500px; padding-top: 1px; }
  .grip { width: 4px; height: 18px; margin: 0 8px 0 5px; background: radial-gradient(circle, #bbb 0 .7px, transparent 1px) 0 0 / 2px 3px; }
  .tool { height: 30px; display: flex; align-items: center; gap: 3px; flex: none; border: 1px solid transparent; border-width: 1px 0; }
  .tool.pressed { border: 1px solid #aaa6a3; border-radius: 3px; background: #dcd8d5; margin-right: 6px; padding-left: 4px; }
  .ic { width: 17px; }
  .pose { color: #00f53c; }
  .goal { color: #ff00c8; }
  .sep { width: 1px; height: 20px; background: #ccc8c4; }
  .plus { margin: 0 21px 0 12px; }
  .minus { margin-right: 13px; }

  .mid { height: 868px; padding-top: 1px; flex: none; display: flex; }
  .left { width: 561px; display: flex; flex-direction: column; }
  .bar { height: 22px; flex: none; display: flex; align-items: center; background: #b8b4b1; padding: 0 2px 0 4px; }
  .bar > span:not(.close) { margin-left: 5px; padding-left: .500px; }
  .close { margin: 0 0 2px auto; width: 18px; height: 17px; border: 1px solid #8b8885; border-radius: 3px; background: #f2f0ee; display: grid; place-items: center; }
  .selbody { height: 133px; flex: none; border: 1px solid #b5b1ad; border-top: 0; background: linear-gradient(#dcdad8, #dcdad8) 279px 0 / 1px 100% no-repeat #fff; }
  .split { flex: none; display: flex; justify-content: center; padding-top: 2px; }
  .split i { width: 18px; height: 1px; margin-left: 2px; background: repeating-linear-gradient(90deg, #b5b2ae 0 1px, transparent 1px 3px); }
  .s7 { height: 6px; }
  .s11 { height: 10px; padding-top: 1px; }
  .s10 { height: 10px; padding-top: 5px; }
  .s6 { height: 6px; }
  .s6 i { margin-left: 8px; }
  .tree { height: 288px; flex: none; display: flex; border: 1px solid #b5b1ad; border-top: 0; background: #fff; padding-top: 1px; }
  .rows { flex: 1; }
  .row { height: 19px; display: flex; }
  .name { width: 279px; display: flex; align-items: center; padding-left: 5px; }
  .name.leaf { padding-left: 43px; }
  .name.deep { padding-left: 25px; }
  .name.sel { background: #308cc6; color: #fff; }
  .arr { width: 18px; }
  .ric { width: 22px; height: 19px; display: flex; align-items: center; padding-left: 1px; }
  .blue, .amber { color: #2a7bc8; font-weight: 700; }
  .amber { color: #c08312; }
  .val { border-left: 1px solid #dcdad8; width: 266px; display: flex; align-items: center; padding-left: 2px; }
  .cb { margin-bottom: 1px; }
  .swatch { width: 13px; height: 13px; margin: 0 4px 0 3px; border: 1px solid #111; background: #888a85; }
  .scroll { width: 15px; display: flex; flex-direction: column; border-left: 1px solid #b5b1ad; margin-top: -1px; }
  .sb { height: 13px; display: grid; place-items: center; border-bottom: 1px solid #b5b1ad; background: #f8f7f6; }
  .sb.end { border: 0; border-top: 1px solid #b5b1ad; }
  .thumb { height: 111px; background: linear-gradient(90deg, #fdfdfd, #eeecea); border-bottom: 1px solid #b5b1ad; }
  .trough { flex: 1; background: #e2e0dd; }
  .btns { display: flex; gap: 6px; padding: 0 2px; flex: none; }
  .btns button { flex: 1; }
  .feed { flex: 1; background: #000; }

  .gutter { width: 22px; display: flex; align-items: center; }
  .gutter i { width: 1px; height: 16px; background: repeating-linear-gradient(#b5b2ae 0 1px, transparent 1px 3px); }
  .gl { padding-left: 3px; gap: 7px; }
  .gr { padding-left: 5px; gap: 7px; }

  .label text { font: 22.500px 'Liberation Sans', sans-serif; fill: #f4f4f4; }

  .right { width: 271px; display: flex; flex-direction: column; }
  .type { height: 39px; flex: none; display: flex; align-items: flex-start; padding: 6px 2px 0; }
  .type > span { width: 43px; line-height: 25px; }
  .combo { width: 138px; height: 25px; margin-right: 6px; display: flex; align-items: center; gap: 7px; padding-left: 4px; border: 1px solid #aaa6a2; border-radius: 3px; background: linear-gradient(#fdfdfc, #edebe9); }
  .clip { width: 111px; overflow: hidden; }
  .zero { width: 80px; }
  .vtree { height: 773px; flex: none; border: 1px solid #b5b1ad; background: linear-gradient(#dcdad8, #dcdad8) 134px 0 / 1px 100% no-repeat #fff; }
  .vrow { height: 17px; line-height: 17px; display: flex; }
  .vn { width: 137px; padding-left: 5px; display: flex; align-items: center; gap: 9px; }
  .vn.sub { padding-left: 43px; }
  .vb { padding-top: 6px; }

  .times { height: 39px; flex: none; display: flex; align-items: flex-start; padding: 7px 0 0 11px; line-height: 25px; }
  .lab { flex: none; padding-top: 1px; }
  .field { width: 142px; height: 25px; margin-right: 6px; padding-left: 2px; line-height: 23px; border: 1px solid #aaa6a2; border-radius: 3px; background: #fff; }
  .exp { margin-left: auto; padding: 1px 16px 0 0; display: flex; align-items: center; gap: 5px; }
  .exp i { width: 14px; height: 14px; border: 1px solid #b4b0ac; background: #fff; margin-bottom: 2px; }
  .status { flex: 1; display: flex; align-items: flex-start; padding: 3px 1px 0 2px; line-height: 25px; }
  .reset { width: 53px; margin-right: 6px; }
  .fps { margin-left: auto; line-height: 19px; }
</style>
